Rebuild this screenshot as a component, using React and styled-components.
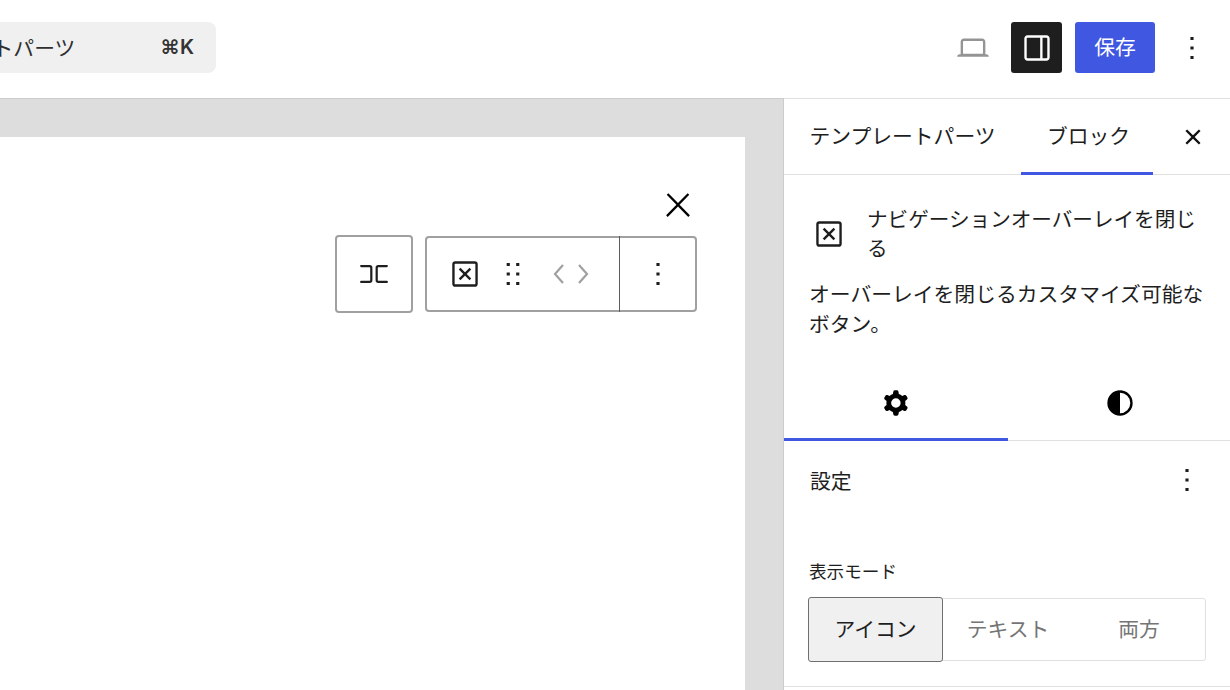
import React from 'react';
import styled, { createGlobalStyle } from 'styled-components';

const GlobalStyle = createGlobalStyle`
  html, body {
    margin: 0;
    padding: 0;
    width: 1230px;
    height: 690px;
    overflow: hidden;
    background: #fff;
  }
  * {
    box-sizing: border-box;
  }
  body {
    font-family: "Inter", "Noto Sans CJK JP", sans-serif;
    font-size: 20.8px;
    color: #1e1e1e;
  }
`;

const Icon = ({ size = 38, children, ...rest }) => (
  <svg width={size} height={size} viewBox="0 0 24 24" fill="currentColor" {...rest}>
    {children}
  </svg>
);

const MoreIcon = (props) => (
  <Icon {...props}>
    <path d="M13 19h-2v-2h2v2zm0-6h-2v-2h2v2zm0-6h-2V5h2v2z" />
  </Icon>
);

const CloseIcon = (props) => (
  <Icon {...props}>
    <path d="M13 11.8l6.1-6.3-1-1-6.1 6.2-6.1-6.2-1 1 6.1 6.3-6.5 6.7 1 1 6.5-6.6 6.5 6.6 1-1z" />
  </Icon>
);

const CloseSmallIcon = (props) => (
  <Icon {...props}>
    <path d="M12 13.06l3.712 3.713 1.061-1.06L13.061 12l3.712-3.712-1.06-1.06L12 10.938 8.288 7.227l-1.061 1.06L10.939 12l-3.712 3.712 1.06 1.061L12 13.061z" />
  </Icon>
);

const BoxCloseIcon = (props) => (
  <Icon {...props}>
    <rect x="4.7" y="4.7" width="14.6" height="14.6" rx="1.2" fill="none" stroke="currentColor" strokeWidth="1.5" />
    <path d="M8.6 8.6l6.8 6.8M15.4 8.6l-6.8 6.8" fill="none" stroke="currentColor" strokeWidth="1.5" />
  </Icon>
);

const Page = styled.div`
  width: 1230px;
  height: 690px;
  display: flex;
  flex-direction: column;
  overflow: hidden;
`;

const Header = styled.header`
  height: 99px;
  flex: none;
  display: flex;
  align-items: flex-start;
  justify-content: space-between;
  padding-top: 22px;
  background: #fff;
  border-bottom: 1px solid #e0e0e0;
`;

const CommandBar = styled.div`
  width: 216px;
  height: 51px;
  display: flex;
  align-items: center;
  padding: 0 22px 2px 0;
  background: #f0f0f0;
  border-radius: 0 8px 8px 0;
`;

const CommandTitle = styled.span`
  flex: 1;
  min-width: 0;
  display: flex;
  justify-content: flex-end;
  padding-right: 85px;
  color: #2f2f2f;
  white-space: nowrap;
  overflow: hidden;
`;

const Shortcut = styled.span`
  font-weight: 600;
  font-size: 20px;
  color: #333;
  white-space: nowrap;
`;

const Actions = styled.div`
  display: flex;
  align-items: center;
  height: 51px;
  padding-right: 19px;
`;

const IconButton = styled.button`
  width: ${(p) => p.$w || 51}px;
  height: 51px;
  margin-left: ${(p) => p.$ml || 0}px;
  padding: 0;
  border: 0;
  border-radius: 3px;
  display: flex;
  align-items: center;
  justify-content: center;
  background: ${(p) => (p.$dark ? '#1e1e1e' : 'transparent')};
  color: ${(p) => (p.$dark ? '#fff' : p.$muted ? '#949494' : '#1e1e1e')};
`;

const SaveButton = styled.button`
  width: 80px;
  height: 51px;
  margin: 0 18px 0 13px;
  border: 0;
  border-radius: 3px;
  padding: 0 0 3px;
  font: inherit;
  color: #fff;
  background: #3f57e1;
`;

const Body = styled.div`
  flex: 1;
  min-height: 0;
  display: flex;
`;

const Canvas = styled.main`
  width: 784px;
  flex: none;
  padding-top: 38px;
  background: #ddd;
  border-right: 1px solid #ccc;
  border-top: 1px solid #ccc;
  margin-top: -1px;
`;

const Sheet = styled.div`
  width: 745px;
  height: 100%;
  background: #fff;
  display: flex;
  flex-direction: column;
  align-items: flex-end;
  padding: 49px 48px 0 0;
`;

const BlockClose = styled.div`
  height: 40px;
  color: #000;
  line-height: 0;
`;

const ToolbarRow = styled.div`
  display: flex;
  align-items: center;
  gap: 12px;
  margin-top: 9px;
`;

const ToolbarGroup = styled.div`
  height: ${(p) => p.$h}px;
  display: flex;
  align-items: stretch;
  background: #fff;
  border: 2px solid #a0a0a0;
  border-radius: 4px;
`;

const ToolSlot = styled.div`
  width: ${(p) => p.$w}px;
  display: flex;
  align-items: center;
  justify-content: center;
  padding: 0 ${(p) => p.$pr || 0}px 0 ${(p) => p.$pl || 0}px;
  color: ${(p) => (p.$muted ? '#a0a0a0' : '#1e1e1e')};
  border-left: ${(p) => (p.$divider ? '1.5px solid #5c5c5c' : '0')};
  margin: ${(p) => (p.$divider ? '-2px 0' : '0')};
`;

const Sidebar = styled.aside`
  flex: 1;
  min-width: 0;
  background: #fff;
`;

const SidebarTabs = styled.div`
  height: 76px;
  display: flex;
  align-items: stretch;
  border-bottom: 1px solid #e0e0e0;
`;

const SidebarTab = styled.div`
  flex: none;
  height: 76px;
  display: flex;
  align-items: center;
  justify-content: center;
  width: ${(p) => p.$w}px;
  color: #1e1e1e;
  white-space: nowrap;
  border-bottom: ${(p) => (p.$active ? '3px solid #3f57e1' : '0')};
  padding: ${(p) => (p.$active ? '0 0 2px 3px' : '0 0 5px 0')};
`;

const SidebarClose = styled.div`
  flex: none;
  width: 77px;
  padding-left: 3px;
  display: flex;
  align-items: center;
  justify-content: center;
  color: #111;
`;

const BlockCard = styled.section`
  padding: 30px 25px 0;
`;

const CardHead = styled.div`
  display: flex;
  align-items: center;
`;

const CardIcon = styled.div`
  width: 58px;
  flex: none;
  line-height: 0;
  padding-left: 1px;
`;

const CardTitle = styled.h2`
  margin: 0;
  font-size: 20.6px;
  font-weight: 400;
  line-height: 29px;
`;

const CardText = styled.p`
  margin: 17px 0 0;
  font-size: 20.8px;
  line-height: 30px;
`;

const InspectorTabs = styled.div`
  display: flex;
  height: 71px;
  margin-top: 30px;
  border-bottom: 1px solid #e0e0e0;
`;

const InspectorTab = styled.div`
  flex: none;
  width: 224px;
  height: 71px;
  display: flex;
  align-items: center;
  justify-content: center;
  padding-bottom: ${(p) => (p.$active ? '2px' : '5px')};
  color: #000;
  border-bottom: ${(p) => (p.$active ? '3px solid #3f57e1' : '0')};
`;

const PanelHead = styled.div`
  height: 80px;
  display: flex;
  align-items: center;
  justify-content: space-between;
  padding: 0 24px 2px 26px;
  font-size: 20.8px;
`;

const Field = styled.div`
  padding: 0 24px;
  margin-top: 8px;
`;

const FieldLabel = styled.div`
  margin-top: 38px;
  padding-left: 1px;
  font-size: 17.6px;
  line-height: 26px;
  color: #1e1e1e;
`;

const Toggle = styled.div`
  display: flex;
  align-items: stretch;
  height: 63px;
  margin-top: 13px;
  border: 1px solid #e0e0e0;
  border-radius: 3px;
`;

const ToggleOption = styled.div`
  width: ${(p) => p.$w}px;
  display: flex;
  align-items: center;
  justify-content: center;
  padding-bottom: 3px;
  color: ${(p) => (p.$active ? '#1e1e1e' : '#757575')};
  background: ${(p) => (p.$active ? '#f0f0f0' : 'transparent')};
  border: ${(p) => (p.$active ? '1px solid #6f6f6f' : '0')};
  border-radius: ${(p) => (p.$active ? '3px' : '0')};
  margin: ${(p) => (p.$active ? '-2px 0 -2px -1px' : '0')};
`;

const PanelEnd = styled.div`
  margin-top: 25px;
  border-top: 1px solid #e0e0e0;
`;

export default function App() {
  return (
    <Page>
      <GlobalStyle />
      <Header>
        <CommandBar>
          <CommandTitle>トパーツ</CommandTitle>
          <Shortcut>⌘K</Shortcut>
        </CommandBar>
        <Actions>
          <IconButton $muted>
            <Icon>
              <path d="M20.5 16h-.7V8c0-1.1-.9-2-2-2H6.2c-1.1 0-2 .9-2 2v8h-.7c-.8 0-1.5.7-1.5 1.5h20c0-.8-.7-1.5-1.5-1.5zM5.7 8c0-.3.2-.5.5-.5h11.6c.3 0 .5.2.5.5v7.6H5.7V8z" />
            </Icon>
          </IconButton>
          <IconButton $dark $ml={13}>
            <Icon>
              <path fillRule="evenodd" d="M18 4H6c-1.1 0-2 .9-2 2v12c0 1.1.9 2 2 2h12c1.1 0 2-.9 2-2V6c0-1.1-.9-2-2-2zM5.5 18V6c0-.3.2-.5.5-.5h8v13H6c-.3 0-.5-.2-.5-.5zm13 0c0 .3-.2.5-.5.5h-2.5v-13H18c.3 0 .5.2.5.5v12z" />
            </Icon>
          </IconButton>
          <SaveButton>保存</SaveButton>
          <IconButton $w={38}>
            <MoreIcon />
          </IconButton>
        </Actions>
      </Header>
      <Body>
        <Canvas>
          <Sheet>
            <BlockClose>
              <CloseIcon />
            </BlockClose>
            <ToolbarRow>
              <ToolbarGroup $h={78}>
                <ToolSlot $w={74}>
                  <Icon>
                    <path d="M3.9 7h5.4c.6 0 1 .4 1 1v8c0 .6-.4 1-1 1H3.9M20.1 7h-5.4c-.6 0-1 .4-1 1v8c0 .6.4 1 1 1h5.4" fill="none" stroke="currentColor" strokeWidth="1.4" strokeLinecap="round" />
                  </Icon>
                </ToolSlot>
              </ToolbarGroup>
              <ToolbarGroup $h={76}>
                <ToolSlot $w={64} $pl={12}>
                  <BoxCloseIcon />
                </ToolSlot>
                <ToolSlot $w={44}>
                  <Icon>
                    <path d="M8 7h2V5H8v2zm0 6h2v-2H8v2zm0 6h2v-2H8v2zm6-14v2h2V5h-2zm0 8h2v-2h-2v2zm0 6h2v-2h-2v2z" />
                  </Icon>
                </ToolSlot>
                <ToolSlot $w={84} $pr={12} $muted>
                  <svg width="36" height="20" viewBox="0 0 36 20" fill="none" stroke="currentColor" strokeWidth="2.2">
                    <path d="M10 1L2 10l8 9M26 1l8 9-8 9" />
                  </svg>
                </ToolSlot>
                <ToolSlot $w={76} $divider>
                  <MoreIcon />
                </ToolSlot>
              </ToolbarGroup>
            </ToolbarRow>
          </Sheet>
        </Canvas>
        <Sidebar>
          <SidebarTabs>
            <SidebarTab $w={237}>テンプレートパーツ</SidebarTab>
            <SidebarTab $w={132} $active>ブロック</SidebarTab>
            <SidebarClose>
              <CloseSmallIcon />
            </SidebarClose>
          </SidebarTabs>
          <BlockCard>
            <CardHead>
              <CardIcon>
                <BoxCloseIcon />
              </CardIcon>
              <CardTitle>ナビゲーションオーバーレイを閉じる</CardTitle>
            </CardHead>
            <CardText>オーバーレイを閉じるカスタマイズ可能なボタン。</CardText>
          </BlockCard>
          <InspectorTabs>
            <InspectorTab $active>
              <Icon>
                <path fillRule="evenodd" clipRule="evenodd" d="M10.289 4.836A1 1 0 0111.275 4h1.306a1 1 0 01.987.836l.244 1.466c.787.26 1.503.679 2.108 1.218l1.393-.522a1 1 0 011.216.437l.653 1.13a1 1 0 01-.23 1.273l-1.148.944a6.025 6.025 0 010 2.435l1.149.946a1 1 0 01.23 1.272l-.653 1.13a1 1 0 01-1.216.437l-1.394-.522c-.605.54-1.32.958-2.108 1.218l-.244 1.466a1 1 0 01-.987.836h-1.306a1 1 0 01-.986-.836l-.244-1.466a5.995 5.995 0 01-2.108-1.218l-1.394.522a1 1 0 01-1.217-.436l-.653-1.131a1 1 0 01.23-1.272l1.149-.946a6.026 6.026 0 010-2.435l-1.148-.944a1 1 0 01-.23-1.272l.653-1.131a1 1 0 011.217-.437l1.393.522a5.994 5.994 0 012.108-1.218l.244-1.466zM14.929 12a3 3 0 11-6 0 3 3 0 016 0z" />
              </Icon>
            </InspectorTab>
            <InspectorTab>
              <Icon>
                <path d="M12 4a8 8 0 100 16 8 8 0 000-16zm0 1.5a6.5 6.5 0 010 13v-13z" fillRule="evenodd" />
              </Icon>
            </InspectorTab>
          </InspectorTabs>
          <PanelHead>
            設定
            <MoreIcon />
          </PanelHead>
          <Field>
            <FieldLabel>表示モード</FieldLabel>
            <Toggle>
              <ToggleOption $w={135} $active>アイコン</ToggleOption>
              <ToggleOption $w={130}>テキスト</ToggleOption>
              <ToggleOption $w={132}>両方</ToggleOption>
            </Toggle>
          </Field>
          <PanelEnd />
        </Sidebar>
      </Body>
    </Page>
  );
}
